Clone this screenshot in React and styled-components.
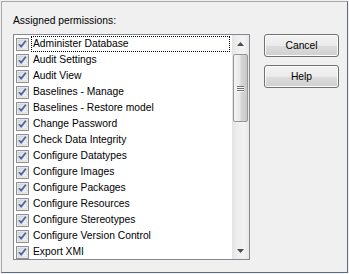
import styled, { createGlobalStyle } from "styled-components";

const GlobalStyle = createGlobalStyle`
  html, body {
    margin: 0;
    padding: 0;
    background: #f0f0f0;
  }
  * {
    box-sizing: border-box;
  }
`;

const permisos = [
  "Administer Database",
  "Audit Settings",
  "Audit View",
  "Baselines - Manage",
  "Baselines - Restore model",
  "Change Password",
  "Check Data Integrity",
  "Configure Datatypes",
  "Configure Images",
  "Configure Packages",
  "Configure Resources",
  "Configure Stereotypes",
  "Configure Version Control",
  "Export XMI",
];

function Check() {
  return (
    <svg width="13" height="13" viewBox="0 0 13 13">
      <defs>
        <linearGradient id="cbfill" x1="0" y1="0" x2="1" y2="1">
          <stop offset="0" stopColor="#d8d8d8" />
          <stop offset="1" stopColor="#f6f6f6" />
        </linearGradient>
      </defs>
      <rect x="0.5" y="0.5" width="12" height="12" fill="#f4f4f4" stroke="#8e8f8f" />
      <rect x="2" y="2" width="9" height="9" fill="url(#cbfill)" stroke="#c9c9c9" strokeWidth="0.6" />
      <path
        d="M3 6.2 L5.2 8.6 L9.8 2.8"
        fill="none"
        stroke="#4c62a3"
        strokeWidth="1.7"
        strokeLinejoin="miter"
      />
    </svg>
  );
}

export default function App() {
  return (
    <>
      <GlobalStyle />
      <Ventana>
        <Marco>
          <ColIzq>
            <Titulo>Assigned permissions:</Titulo>
            <Lista>
              <Items>
                {permisos.map((p, i) => (
                  <Fila key={p}>
                    <Check />
                    <Texto $foco={i === 0}>{p}</Texto>
                  </Fila>
                ))}
              </Items>
              <Scroll>
                <Flecha>
                  <svg width="7" height="4" viewBox="0 0 7 4">
                    <path d="M3.5 0 L7 4 L0 4 Z" fill="#4d4d4d" />
                  </svg>
                </Flecha>
                <Pista>
                  <Thumb>
                    <Grip>
                      <span />
                      <span />
                      <span />
                    </Grip>
                  </Thumb>
                </Pista>
                <Flecha>
                  <svg width="7" height="4" viewBox="0 0 7 4">
                    <path d="M0 0 L7 0 L3.5 4 Z" fill="#4d4d4d" />
                  </svg>
                </Flecha>
              </Scroll>
            </Lista>
          </ColIzq>
          <ColDer>
            <Boton>Cancel</Boton>
            <Boton>Help</Boton>
          </ColDer>
        </Marco>
      </Ventana>
    </>
  );
}

const Ventana = styled.div`
  width: 349px;
  height: 274px;
  padding: 1px 1px 1px 1px;
  background: #f0f0f0;
  font-family: "Liberation Sans", Arial, sans-serif;
  font-size: 10.3px;
  color: #000;
`;

const Marco = styled.div`
  width: 347px;
  height: 272px;
  border: 1px solid;
  border-color: #a9a9a9 #5f6b7c #5f6b7c #a9a9a9;
  display: flex;
  padding: 12px 8px 13px 11px;
  gap: 14px;
`;

const ColIzq = styled.div`
  display: flex;
  flex-direction: column;
`;

const Titulo = styled.div`
  height: 13px;
  line-height: 13px;
  margin-bottom: 7px;
`;

const Lista = styled.div`
  width: 237px;
  height: 226px;
  border: 1px solid #828790;
  background: #fff;
  display: flex;
`;

const Items = styled.div`
  flex: 1;
  display: flex;
  flex-direction: column;
  padding: 1px 2px 0 2px;
  overflow: hidden;
`;

const Fila = styled.div`
  height: 16px;
  display: flex;
  align-items: center;
  gap: 2px;
  svg {
    flex: none;
  }
`;

const Texto = styled.span`
  flex: 1;
  height: 16px;
  line-height: 14px;
  padding: 0 1px;
  border: 1px dotted ${(p) => (p.$foco ? "#000" : "transparent")};
  white-space: nowrap;
`;

const Scroll = styled.div`
  width: 17px;
  display: flex;
  flex-direction: column;
  background: linear-gradient(to right, #e4e4e4, #eeeeee 30%, #f2f2f2 70%, #e8e8e8);
`;

const Flecha = styled.div`
  height: 17px;
  display: flex;
  align-items: center;
  justify-content: center;
`;

const Pista = styled.div`
  flex: 1;
  padding-top: 2px;
  display: flex;
  flex-direction: column;
  align-items: center;
`;

const Thumb = styled.div`
  width: 15px;
  height: 68px;
  border: 1px solid #979797;
  border-radius: 2px;
  background: linear-gradient(to right, #f3f3f3, #e9e9e9 45%, #d6d6d6 55%, #c9c9c9);
  display: flex;
  align-items: center;
  justify-content: center;
`;

const Grip = styled.div`
  display: flex;
  flex-direction: column;
  gap: 1px;
  span {
    display: block;
    width: 7px;
    height: 1px;
    background: #6f6f6f;
    box-shadow: 0 1px 0 #f8f8f8;
  }
`;

const ColDer = styled.div`
  display: flex;
  flex-direction: column;
  gap: 8px;
  padding-top: 20px;
`;

const Boton = styled.button`
  width: 75px;
  height: 23px;
  border: 1px solid #707070;
  border-radius: 3px;
  background: linear-gradient(to bottom, #f2f2f2 0%, #ebebeb 50%, #dddddd 50%, #cfcfcf 100%);
  box-shadow: inset 0 0 0 1px #fcfcfc;
  font-family: "Liberation Sans", Arial, sans-serif;
  font-size: 10.3px;
  color: #000;
  padding: 0;
`;
